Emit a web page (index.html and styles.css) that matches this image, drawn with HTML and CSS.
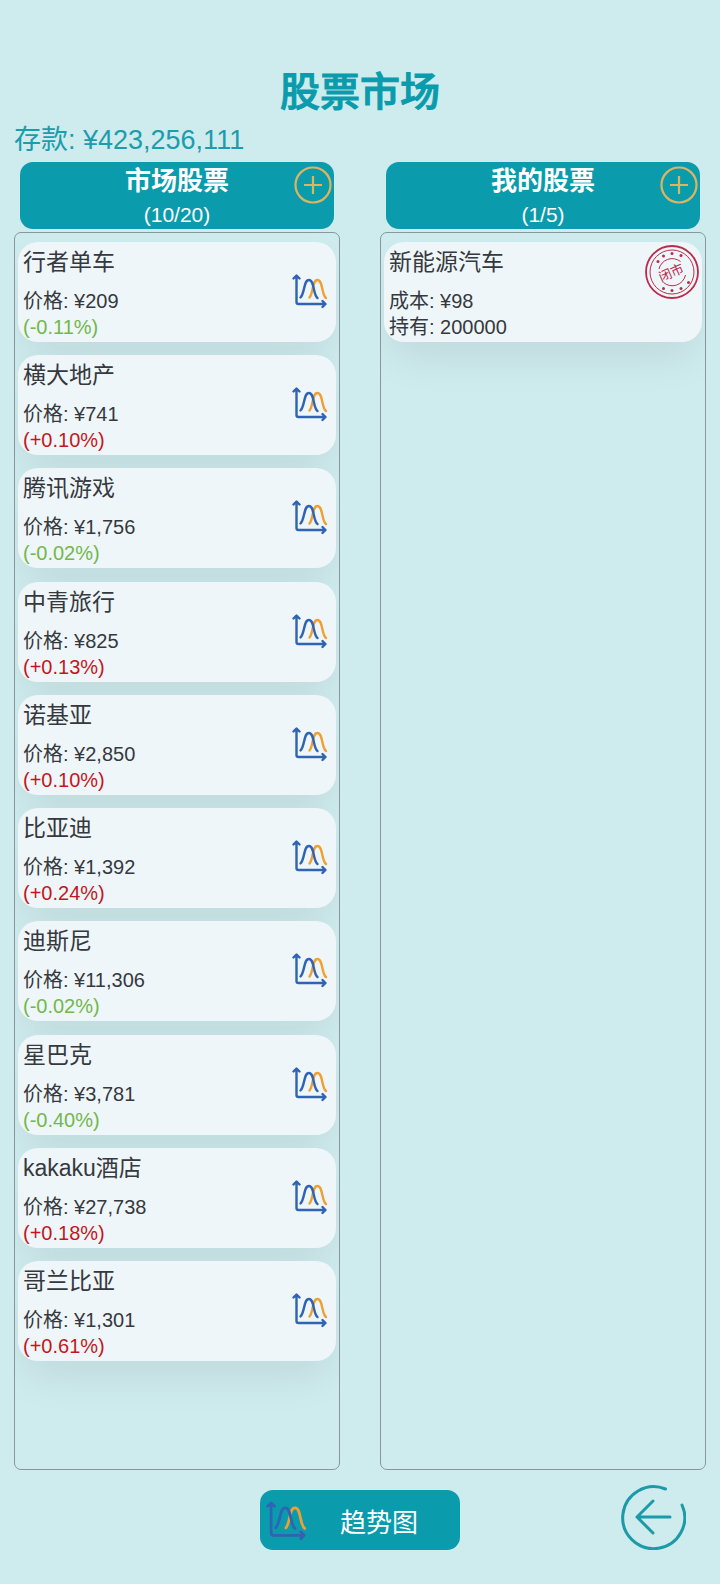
FILE: index.html
```html
<!DOCTYPE html>
<html lang="zh-CN">
<head>
    <meta charset="UTF-8">
    <meta name="viewport" content="width=device-width, initial-scale=1.0">
    <title>股票市场</title>
    <link rel="stylesheet" href="styles.css">
</head>
<body>
    <svg class="sprite" aria-hidden="true">
        <symbol id="icon-chart" viewBox="0 0 36 36">
            <g fill="none" stroke-width="2.400" stroke-linecap="round" stroke-linejoin="round">
                <path stroke="#2f63b3" d="M1.500 5.500 L4.500 2.500 L7.500 5.500 M4.500 3 V29 Q4.500 31 6.500 31 H33 M30.500 28 L33.500 31 L30.500 34"/>
                <path stroke="#f0a030" d="M17.500 24.500 C21.500 20 20 7 25.500 7 C31 7 29.500 22 34 25"/>
                <path stroke="#2f63b3" d="M8.500 24.500 C13 20 11.500 7 17 7 C22.500 7 21 22 25.500 25"/>
            </g>
        </symbol>
        <symbol id="icon-plus" viewBox="0 0 38 38">
            <g fill="none" stroke="#dfb45f" stroke-width="2.200">
                <circle cx="19" cy="19" r="17.500"/>
                <path d="M10 19 H28 M19 10 V28"/>
            </g>
        </symbol>
    </svg>
    <h1 class="title">股票市场</h1>
    <p class="balance">存款: ¥423,256,111</p>
    <main class="market">
        <section class="column">
            <header class="column-head">
                <h2>市场股票</h2>
                <p>(10/20)</p>
                <button class="plus-btn" aria-label="增加"><svg><use href="#icon-plus"/></svg></button>
            </header>
            <ul class="panel">
                <li class="card">
                    <div class="info"><h3>行者单车</h3><p>价格: ¥209</p><p class="down">(-0.11%)</p></div>
                    <button class="chart-btn" aria-label="趋势"><svg><use href="#icon-chart"/></svg></button>
                </li>
                <li class="card">
                    <div class="info"><h3>横大地产</h3><p>价格: ¥741</p><p class="up">(+0.10%)</p></div>
                    <button class="chart-btn" aria-label="趋势"><svg><use href="#icon-chart"/></svg></button>
                </li>
                <li class="card">
                    <div class="info"><h3>腾讯游戏</h3><p>价格: ¥1,756</p><p class="down">(-0.02%)</p></div>
                    <button class="chart-btn" aria-label="趋势"><svg><use href="#icon-chart"/></svg></button>
                </li>
                <li class="card">
                    <div class="info"><h3>中青旅行</h3><p>价格: ¥825</p><p class="up">(+0.13%)</p></div>
                    <button class="chart-btn" aria-label="趋势"><svg><use href="#icon-chart"/></svg></button>
                </li>
                <li class="card">
                    <div class="info"><h3>诺基亚</h3><p>价格: ¥2,850</p><p class="up">(+0.10%)</p></div>
                    <button class="chart-btn" aria-label="趋势"><svg><use href="#icon-chart"/></svg></button>
                </li>
                <li class="card">
                    <div class="info"><h3>比亚迪</h3><p>价格: ¥1,392</p><p class="up">(+0.24%)</p></div>
                    <button class="chart-btn" aria-label="趋势"><svg><use href="#icon-chart"/></svg></button>
                </li>
                <li class="card">
                    <div class="info"><h3>迪斯尼</h3><p>价格: ¥11,306</p><p class="down">(-0.02%)</p></div>
                    <button class="chart-btn" aria-label="趋势"><svg><use href="#icon-chart"/></svg></button>
                </li>
                <li class="card">
                    <div class="info"><h3>星巴克</h3><p>价格: ¥3,781</p><p class="down">(-0.40%)</p></div>
                    <button class="chart-btn" aria-label="趋势"><svg><use href="#icon-chart"/></svg></button>
                </li>
                <li class="card">
                    <div class="info"><h3>kakaku酒店</h3><p>价格: ¥27,738</p><p class="up">(+0.18%)</p></div>
                    <button class="chart-btn" aria-label="趋势"><svg><use href="#icon-chart"/></svg></button>
                </li>
                <li class="card">
                    <div class="info"><h3>哥兰比亚</h3><p>价格: ¥1,301</p><p class="up">(+0.61%)</p></div>
                    <button class="chart-btn" aria-label="趋势"><svg><use href="#icon-chart"/></svg></button>
                </li>
            </ul>
        </section>
        <section class="column">
            <header class="column-head">
                <h2>我的股票</h2>
                <p>(1/5)</p>
                <button class="plus-btn" aria-label="增加"><svg><use href="#icon-plus"/></svg></button>
            </header>
            <ul class="panel">
                <li class="card">
                    <div class="info"><h3>新能源汽车</h3><p>成本: ¥98</p><p>持有: 200000</p></div>
                    <svg class="stamp" viewBox="0 0 54 54">
                        <g fill="none" stroke="#b92c4c">
                            <circle cx="27" cy="27" r="26" stroke-width="1.800"/>
                            <circle cx="27" cy="27" r="22" stroke-width="1"/>
                            <path stroke-width="1" d="M14 24 A13.500 13.500 0 0 1 35.500 16.500 M40.500 30 A13.500 13.500 0 0 1 18.500 37.500"/>
                        </g>
                        <g fill="#b92c4c">
                            <circle cx="13" cy="16.500" r="1.500"/>
                            <circle cx="18.500" cy="11" r="1.500"/>
                            <circle cx="27" cy="8.500" r="1.500"/>
                            <circle cx="36" cy="10.500" r="1.500"/>
                            <circle cx="43.500" cy="37.500" r="1.500"/>
                            <circle cx="36" cy="43.500" r="1.500"/>
                            <circle cx="27" cy="45.500" r="1.500"/>
                            <circle cx="18.500" cy="43.500" r="1.500"/>
                            <text class="stamp-text" x="26" y="32" text-anchor="middle" transform="rotate(-24 27 27)">闭市</text>
                        </g>
                    </svg>
                </li>
            </ul>
        </section>
    </main>
    <footer class="footer">
        <button class="trend-btn"><svg><use href="#icon-chart"/></svg><span>趋势图</span></button>
        <button class="back-btn" aria-label="返回">
            <svg viewBox="0 0 66 66" fill="none" stroke="#1c9aa8" stroke-width="3" stroke-linecap="round" stroke-linejoin="round">
                <path d="M45.500 5 A31 31 0 1 0 62 21"/>
                <path d="M50 33 H17 M33 17 L17 33 L33 49"/>
            </svg>
        </button>
    </footer>
</body>
</html>
```
FILE: styles.css
```css
* {
    box-sizing: border-box;
    margin: 0;
    padding: 0;
}
body {
    font-family: "Liberation Sans", "Noto Sans CJK SC", sans-serif;
    display: flex;
    flex-direction: column;
    min-height: 100vh;
    padding: 65px 14px 0;
    background-color: #ceebed;
    color: #35393d;
}
button {
    background: none;
    border: none;
    font-family: inherit;
    cursor: pointer;
}
svg {
    display: block;
    width: 100%;
    height: 100%;
}
.sprite {
    position: absolute;
    width: 0;
    height: 0;
}
.title {
    font-size: 40px;
    font-weight: 500;
    line-height: 54px;
    text-align: center;
    color: #0a9bac;
    -webkit-text-stroke: 1px #0a9bac;
}
.balance {
    font-size: 27px;
    line-height: 43px;
    color: #1c9cac;
}
.market {
    display: grid;
    grid-template-columns: 1fr 1fr;
    gap: 40px;
    flex: 1;
}
.column {
    display: flex;
    flex-direction: column;
    gap: 3px;
}
.column-head {
    position: relative;
    margin: 0 6px;
    border-radius: 13px;
    background-color: #0a9bac;
    color: white;
    text-align: center;
}
.column-head h2 {
    font-size: 26px;
    line-height: 38px;
}
.column-head p {
    font-size: 21px;
    line-height: 29px;
}
.plus-btn {
    position: absolute;
    top: 4px;
    right: 2px;
    width: 38px;
    height: 38px;
}
.panel {
    display: flex;
    flex-direction: column;
    justify-content: space-between;
    flex: 1;
    padding: 9px 3px 108px;
    border: 1px solid #87979d;
    border-radius: 7px;
    overflow: hidden;
    list-style: none;
}
.card {
    display: flex;
    align-items: center;
    justify-content: space-between;
    padding: 0 8px 2px 5px;
    border-radius: 20px;
    background-color: #eff6f9;
    box-shadow: 0 20px 44px -6px rgba(0, 0, 0, 0.08);
}
.info h3 {
    margin-bottom: 6px;
    font-size: 23px;
    font-weight: normal;
    line-height: 40px;
}
.info p {
    font-size: 20px;
    line-height: 26px;
}
.info .up {
    color: #c4161c;
}
.info .down {
    color: #72b84c;
}
.chart-btn {
    width: 36px;
    height: 36px;
}
.stamp {
    align-self: flex-start;
    width: 54px;
    height: 54px;
    margin: 3px -5px 0 0;
}
.stamp-text {
    font-size: 13px;
}
.footer {
    display: grid;
    grid-template-columns: 1fr auto 1fr;
    align-items: center;
    height: 114px;
    padding-bottom: 14px;
}
.trend-btn {
    grid-column: 2;
    display: flex;
    align-items: center;
    gap: 33px;
    width: 200px;
    height: 60px;
    padding: 0 6px;
    border-radius: 13px;
    background-color: #0a9bac;
    color: white;
    font-size: 26px;
}
.trend-btn svg {
    width: 41px;
    height: 41px;
}
.back-btn {
    justify-self: end;
    width: 66px;
    height: 66px;
    margin: 0 20px 7px 0;
}
```
